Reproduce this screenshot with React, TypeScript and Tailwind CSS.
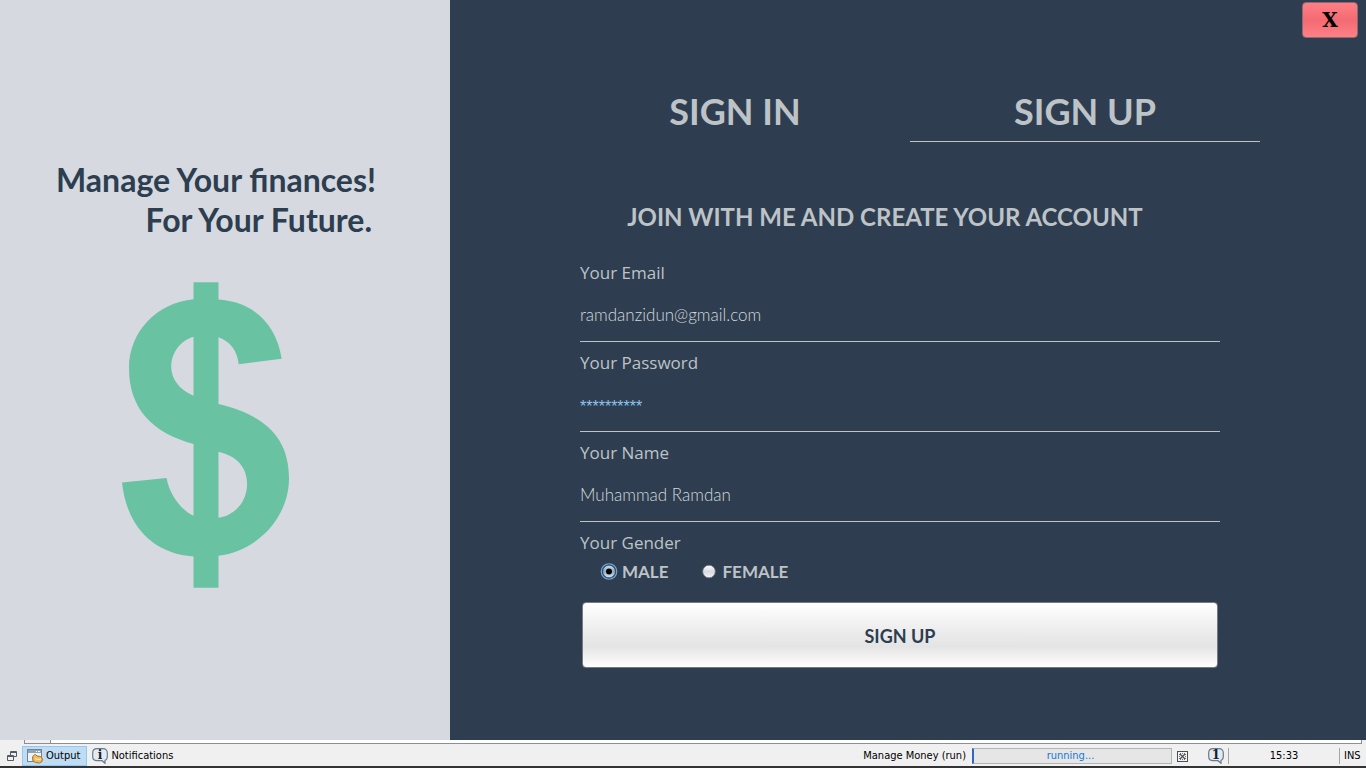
import { useState } from "react";
import type { ReactNode } from "react";

const GOTHIC = "font-['Lato','Liberation_Sans',sans-serif]";

type FieldProps = {
  id: string;
  label: string;
  value: string;
  inputClass: string;
};

function Field({ id, label, value, inputClass }: FieldProps) {
  return (
    <div className="flex h-[90px] flex-col border-b border-[#bfc3c5]">
      <label htmlFor={id} className="h-[38px] pt-[9px] text-[17px] leading-6">
        {label}
      </label>
      <input
        id={id}
        type="text"
        defaultValue={value}
        className={`h-12 w-full bg-transparent outline-none ${inputClass}`}
      />
    </div>
  );
}

type RadioProps = {
  label: string;
  checked: boolean;
  onSelect: () => void;
};

function Radio({ label, checked, onSelect }: RadioProps) {
  return (
    <label className="flex items-center gap-1">
      <input
        type="radio"
        name="gender"
        checked={checked}
        onChange={onSelect}
        className="peer sr-only"
      />
      <svg width="18" height="18" viewBox="0 0 18 18" aria-hidden="true">
        <defs>
          <linearGradient id={`dot-${label}`} x1="0" y1="0" x2="0" y2="1">
            <stop offset="0" stopColor={checked ? "#cfe0ee" : "#ffffff"} />
            <stop offset="0.5" stopColor={checked ? "#8fa9bf" : "#d8dae0"} />
            <stop offset="1" stopColor={checked ? "#dcebf5" : "#f4f4f7"} />
          </linearGradient>
        </defs>
        {checked && <circle cx="9" cy="8.5" r="7.7" fill="#1f3042" stroke="#6ea2d5" strokeWidth="1.3" />}
        <circle cx="9" cy="8.5" r="6.3" fill={`url(#dot-${label})`} stroke={checked ? "#3c5268" : "#6b747e"} strokeWidth="0.8" />
        {checked && <circle cx="9" cy="8.5" r="3" fill="#050505" />}
      </svg>
      <span className={`${GOTHIC} text-[17px] leading-6 font-bold`}>{label}</span>
    </label>
  );
}

function DollarEmblem() {
  return (
    <svg
      viewBox="66 36 502 918"
      className="mt-[42px] ml-[122px] h-[306px] w-[167px]"
      fill="#69c3a3"
      fillRule="evenodd"
      role="img"
      aria-label="Dollar"
    >
      <path d="M281 36H356V88C460 95 530 160 546 266L417 282C412 240 390 213 356 201V402C480 432 568 490 568 625C568 745 470 845 356 858V954H281V860C160 852 80 770 66 638L200 624C208 670 240 718 281 738V522C155 488 87 415 87 293C87 185 170 98 281 87ZM281 200C240 212 214 250 214 290C214 328 240 360 281 377ZM356 545V744C405 737 442 695 442 642C442 592 412 558 356 545Z" />
    </svg>
  );
}

function WindowsIcon() {
  return (
    <svg width="12" height="12" viewBox="0 0 12 12" fill="#f0f0f0" stroke="#555b62" aria-hidden="true">
      <path d="M4.5 1.5h6v5h-6zM4.5 2.5h6" />
      <path d="M1.5 5.5h6v5h-6zM1.5 6.5h6" />
    </svg>
  );
}

function OutputIcon() {
  return (
    <svg width="16" height="16" viewBox="0 0 16 16" aria-hidden="true">
      <rect x="0.5" y="1.5" width="14" height="12" fill="#eef3f6" stroke="#708494" />
      <path d="M1 2h13v3H1z" fill="#8fa5b5" />
      <path d="M9 3.5h1M11 3.5h2" stroke="#fff" />
      <path d="M5.5 10c0-2 1.5-3.5 3-3.5L10 8l3.5.5 2 2.5-.5 2.5-2.5 1.5-4-.5-2.5-1.5z" fill="#eebc62" stroke="#a97126" />
      <path d="M8 10.5l3 1 3-.5" fill="none" stroke="#fff0bc" />
    </svg>
  );
}

function Bubble({ mark }: { mark: string }) {
  return (
    <svg width="16" height="16" viewBox="0 0 16 16" aria-hidden="true">
      <path
        d="M5 .7h6c2.7 0 4.3 1.8 4.3 4.3v3.5c0 2-1 3.3-2.3 3.8V15.3l-3-2.6H5C2.3 12.7.7 11 .7 8.5V5C.7 2.5 2.3.7 5 .7z"
        fill="#e2ebf2"
        stroke="#697b89"
        strokeWidth="1.2"
      />
      <text x="8" y="11" textAnchor="middle" className="font-['DejaVu_Serif',serif] text-[12px] font-bold" fill="#15202a">
        {mark}
      </text>
    </svg>
  );
}

function StopIcon() {
  return (
    <svg width="11" height="11" viewBox="0 0 11 11" fill="none" stroke="#4b5055" aria-hidden="true">
      <rect x="0.5" y="0.5" width="10" height="10" fill="#f2f2f2" />
      <path d="M3 3l5 5M8 3L3 8" strokeWidth="1.2" />
      <path d="M2 3.5h1.5V2M5 2.5h1M7.5 2v1.5H9M2.5 5v1M8.5 5v1M2 7.5h1.5V9M5 8.5h1M7.5 9V7.5H9" strokeWidth="0.8" />
    </svg>
  );
}

function Separator({ children }: { children: ReactNode }) {
  return <div className="flex h-4 items-center border-l border-[#a5a5a5]">{children}</div>;
}

function StatusBar() {
  return (
    <footer className="font-['DejaVu_Sans_Condensed','Noto_Sans',sans-serif] text-[11px] leading-4 text-black">
      <div className="flex h-1 bg-[#f0f0f0] pr-1 pl-6">
        <div className="w-[26px] border-b border-l border-[#8d8e98]" />
        <div className="flex-1 border-x border-b border-[#8d8e98] bg-white" />
      </div>
      <div className="flex h-6 items-center border-b-2 border-[#333333] bg-[#f0f0f0] pt-0.5 pl-1.5">
        <button type="button" aria-label="Restore window group" className="mr-1">
          <WindowsIcon />
        </button>
        <button
          type="button"
          className="flex h-5 items-center gap-[3px] border border-[#90c8f6] bg-[#bfdcf2] pr-1.5 pl-1"
        >
          <OutputIcon />
          Output
        </button>
        <button type="button" className="ml-[5px] flex items-center gap-[3px]">
          <Bubble mark="i" />
          Notifications
        </button>
        <div className="ml-auto flex items-center">
          <span>Manage Money (run)</span>
          <div className="ml-1.5 flex h-4 w-50 items-center justify-center border border-l-2 border-[#b4b4b4] border-l-[#2f68c5] bg-[#e6e6e6] pr-1 text-[#1479d7]">
            running...
          </div>
          <button type="button" aria-label="Stop process" className="ml-[5px]">
            <StopIcon />
          </button>
          <button type="button" aria-label="One notification" className="mr-1 ml-5">
            <Bubble mark="1" />
          </button>
          <Separator>
            <span className="w-[110px] text-center">15:33</span>
          </Separator>
          <Separator>
            <span className="w-[26px] pl-1">INS</span>
          </Separator>
        </div>
      </div>
    </footer>
  );
}

export default function App() {
  const [gender, setGender] = useState("MALE");

  return (
    <div className="flex min-h-screen flex-col font-['Open_Sans','Noto_Sans',sans-serif]">
      <div className="flex flex-1">
        <aside className="flex w-[450px] shrink-0 flex-col bg-[#d6d9df] pt-40 text-[#2c3e50]">
          <div className={`${GOTHIC} w-[376px] text-right text-[32px] leading-10 font-bold whitespace-nowrap`}>
            <p>Manage Your finances!</p>
            <p className="pr-1">For Your Future.</p>
          </div>
          <DollarEmblem />
        </aside>

        <main className="flex flex-1 flex-col bg-[#2e3e50] text-[#bdc3c7]">
          <div className="flex justify-end pt-0.5 pr-2">
            <button
              type="button"
              aria-label="Close"
              className="h-9 w-14 rounded border border-[#8c6a74] bg-linear-to-b from-[#ff7f85] via-[#f46a72] to-[#ff8087] font-['DejaVu_Serif',serif] text-xl leading-6 font-bold text-black"
            >
              X
            </button>
          </div>

          <nav className={`${GOTHIC} mt-[42px] flex pr-[106px] pl-[110px] text-4xl leading-[60px] font-bold`}>
            <button type="button" className="h-[62px] flex-1 border-b border-transparent">
              SIGN IN
            </button>
            <button type="button" className="h-[62px] flex-1 border-b border-[#bfc3c5]">
              SIGN UP
            </button>
          </nav>

          <form className="flex flex-col pr-[146px] pl-[130px]" onSubmit={(e) => e.preventDefault()}>
            <h1 className={`${GOTHIC} mt-[55px] pr-[30px] pb-[15px] text-center text-2xl leading-10 font-bold whitespace-nowrap`}>
              JOIN WITH ME AND CREATE YOUR ACCOUNT
            </h1>
            <Field id="email" label="Your Email" value="ramdanzidun@gmail.com" inputClass="font-['Lato',sans-serif] text-[17px] font-light text-[#d3d8db]" />
            <Field id="password" label="Your Password" value="**********" inputClass="pt-1.5 font-['Liberation_Sans',sans-serif] text-base text-[#8fc4ea]" />
            <Field id="name" label="Your Name" value="Muhammad Ramdan" inputClass="font-['Lato',sans-serif] text-[17px] font-light text-[#d3d8db]" />
            <fieldset>
              <legend className="pt-[9px] text-[17px] leading-6">Your Gender</legend>
              <div className="flex gap-8 pt-[5px] pl-5">
                <Radio label="MALE" checked={gender === "MALE"} onSelect={() => setGender("MALE")} />
                <Radio label="FEMALE" checked={gender === "FEMALE"} onSelect={() => setGender("FEMALE")} />
              </div>
            </fieldset>
            <button
              type="submit"
              className={`${GOTHIC} mx-0.5 mt-[18px] h-[66px] rounded border border-[#777b81] bg-[linear-gradient(to_bottom,#ffffff,#eeeeee_40%,#e4e4e4_68%,#ffffff)] pt-0.5 text-lg leading-6 font-bold text-[#2c3e50]`}
            >
              SIGN UP
            </button>
          </form>
        </main>
      </div>
      <StatusBar />
    </div>
  );
}
